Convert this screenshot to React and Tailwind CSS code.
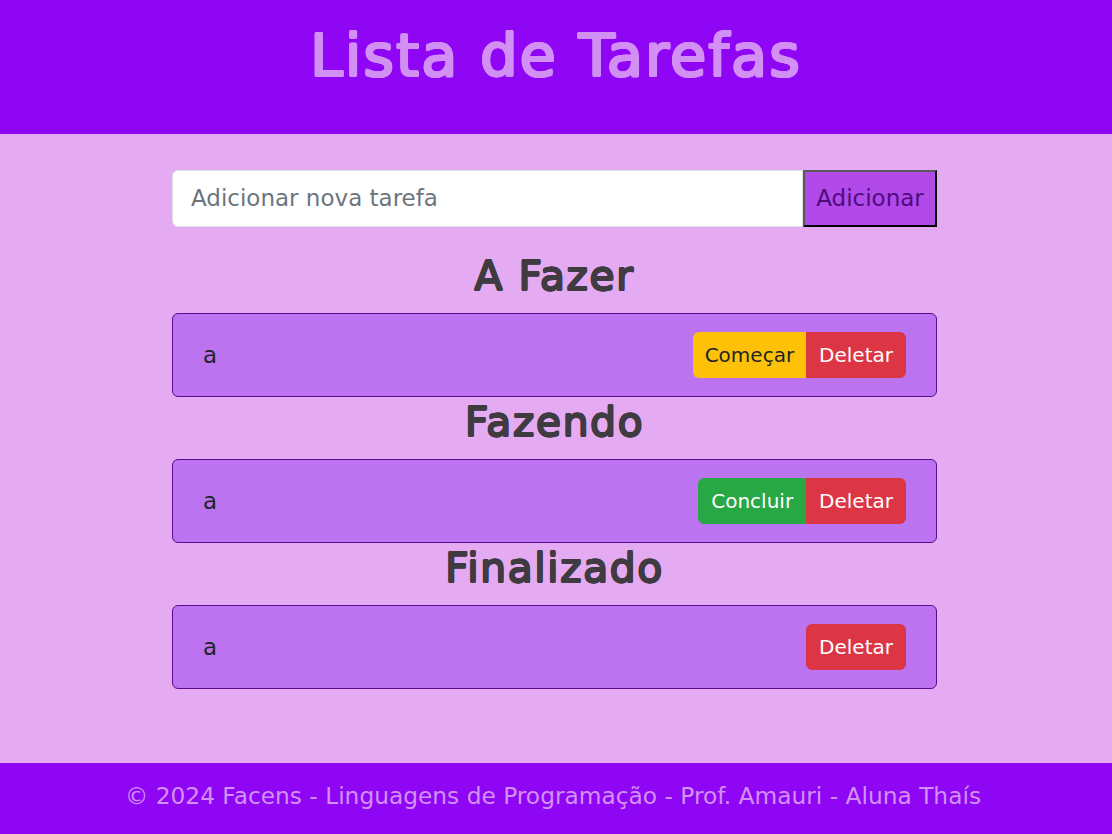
import { useState } from "react";

const initialTasks = [
  { id: 1, text: "a", status: "todo" },
  { id: 2, text: "a", status: "doing" },
  { id: 3, text: "a", status: "done" },
];

const sections = [
  { key: "todo", title: "A Fazer" },
  { key: "doing", title: "Fazendo" },
  { key: "done", title: "Finalizado" },
];

const TaskCard = ({ task, onAdvance, onDelete }) => (
  <div className="flex h-[84px] items-center justify-between rounded-md border border-[#5c0b8c] bg-[#bb73ef] px-[30px]">
    <span className="text-[23px] text-[#212529]">{task.text}</span>
    <div className="flex">
      {task.status === "todo" && (
        <button
          onClick={() => onAdvance(task.id)}
          className="rounded-l-md bg-[#ffc107] px-3 py-[9px] text-[20px] leading-[28px] text-[#212529]"
        >
          Começar
        </button>
      )}
      {task.status === "doing" && (
        <button
          onClick={() => onAdvance(task.id)}
          className="rounded-l-md border border-[#28a745] bg-[#28a745] px-3 py-2 text-[20px] leading-[28px] text-white"
        >
          Concluir
        </button>
      )}
      <button
        onClick={() => onDelete(task.id)}
        className={
          task.status === "done"
            ? "rounded-md border border-[#dc3545] bg-[#dc3545] px-3 py-2 text-[20px] leading-[28px] text-white"
            : "rounded-r-md border border-[#dc3545] bg-[#dc3545] px-3 py-2 text-[20px] leading-[28px] text-white"
        }
      >
        Deletar
      </button>
    </div>
  </div>
);

const App = () => {
  const [tasks, setTasks] = useState(initialTasks);
  const [newTask, setNewTask] = useState("");

  const addTask = () => {
    if (!newTask.trim()) return;
    setTasks([...tasks, { id: Date.now(), text: newTask.trim(), status: "todo" }]);
    setNewTask("");
  };

  const advance = (id) => {
    setTasks(
      tasks.map((t) =>
        t.id === id ? { ...t, status: t.status === "todo" ? "doing" : "done" } : t
      )
    );
  };

  const remove = (id) => setTasks(tasks.filter((t) => t.id !== id));

  return (
    <div className="flex min-h-screen flex-col bg-[#e4aaf2] font-['DejaVu_Sans',sans-serif]">
      <header className="h-[134px] bg-[#8f06f5] pt-[21px] text-center">
        {/* regular face, thickened to look like the synthetic bold of the original */}
        <h1 className="text-[59px] font-normal leading-[1.2] tracking-[2px] text-[#d28ff4] [text-shadow:1.3px_0_0_#d28ff4,-1.3px_0_0_#d28ff4,0_1.2px_0_#d28ff4,0_-1.2px_0_#d28ff4,0.9px_0.9px_0_#d28ff4,-0.9px_-0.9px_0_#d28ff4,0.9px_-0.9px_0_#d28ff4,-0.9px_0.9px_0_#d28ff4]">
          Lista de Tarefas
        </h1>
      </header>

      <main className="flex-1 pl-[172px] pr-[175px] pt-[36px]">
        <div className="flex h-[57px]">
          <input
            type="text"
            value={newTask}
            onChange={(e) => setNewTask(e.target.value)}
            placeholder="Adicionar nova tarefa"
            className="min-w-0 flex-1 rounded-l-md border border-[#dee2e6] bg-white px-[18px] text-[23px] text-[#212529] outline-none placeholder:text-[#6c757d]"
          />
          <button
            onClick={addTask}
            className="w-[134px] border-2 border-t-[#5a5a5a] border-l-[#5a5a5a] border-r-black border-b-black bg-[#b14ae9] text-[23px] text-[#4f0c80]"
          >
            Adicionar
          </button>
        </div>

        <div className="mt-[24px]">
          {sections.map((s) => (
            <section key={s.key}>
              <h2 className="pt-px pb-[13px] text-center text-[41px] font-normal leading-[48px] tracking-[1.5px] text-[#3f3b41] [text-shadow:0.9px_0_0_#3f3b41,-0.9px_0_0_#3f3b41,0_0.8px_0_#3f3b41,0_-0.8px_0_#3f3b41,0.6px_0.6px_0_#3f3b41,-0.6px_-0.6px_0_#3f3b41,0.6px_-0.6px_0_#3f3b41,-0.6px_0.6px_0_#3f3b41]">
                {s.title}
              </h2>
              {tasks
                .filter((t) => t.status === s.key)
                .map((t) => (
                  <TaskCard key={t.id} task={t} onAdvance={advance} onDelete={remove} />
                ))}
            </section>
          ))}
        </div>
      </main>

      <footer className="h-[71px] bg-[#8f06f5] pt-[16px] pr-[6px] text-center text-[23.3px] leading-[33px] text-[#d28ff4]">
        © 2024 Facens - Linguagens de Programação - Prof. Amauri - Aluna Thaís
      </footer>
    </div>
  );
};

export default App;
